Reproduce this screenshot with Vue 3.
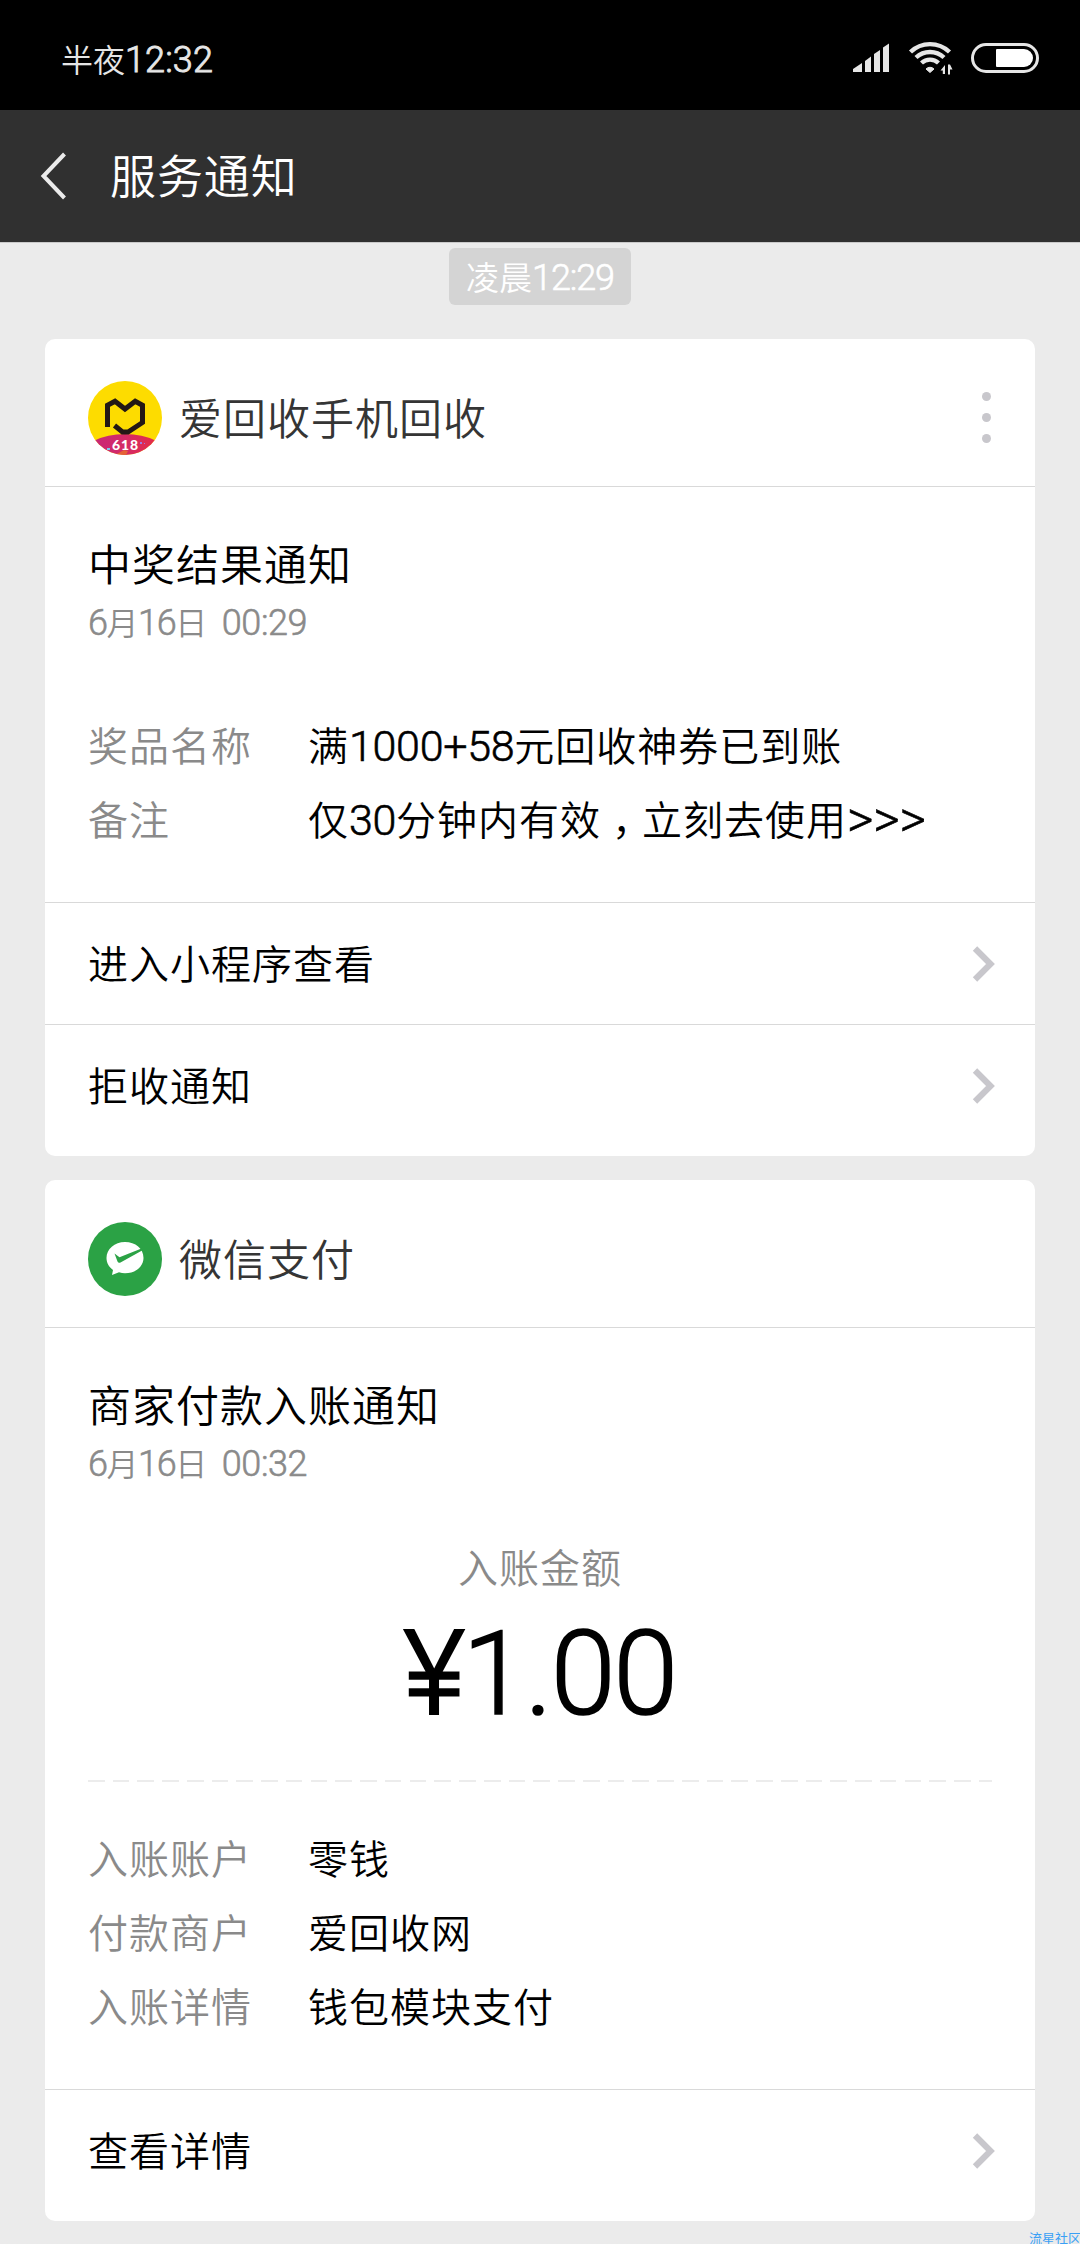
<script setup>
import { h } from 'vue'

// Renders a string with its Latin runs and full-width commas in their own spans.
const Mixed = (props) =>
  props.text
    .split(/(>+|[0-9:+]+|，)/)
    .filter(Boolean)
    .map((part) => {
      if (part === '，') return h('span', { class: 'comma' }, part)
      if (/^>/.test(part)) return h('span', { class: 'num arrows' }, part)
      if (/^[0-9:+]/.test(part)) return h('span', { class: 'num' }, part)
      return part
    })
Mixed.props = ['text']

const cards = [
  {
    name: '爱回收手机回收',
    avatar: 'aihuishou',
    menu: true,
    title: '中奖结果通知',
    day: '6月16日',
    time: '00:29',
    fields: [
      ['奖品名称', '满1000+58元回收神券已到账'],
      ['备注', '仅30分钟内有效，立刻去使用>>>'],
    ],
    links: ['进入小程序查看', '拒收通知'],
  },
  {
    name: '微信支付',
    avatar: 'pay',
    title: '商家付款入账通知',
    day: '6月16日',
    time: '00:32',
    amount: { label: '入账金额', value: '1.00' },
    fields: [
      ['入账账户', '零钱'],
      ['付款商户', '爱回收网'],
      ['入账详情', '钱包模块支付'],
    ],
    links: ['查看详情'],
  },
]
</script>

<template>
  <div class="screen">
    <div class="status">
      <div class="clock"><Mixed text="半夜12:32" /></div>
      <svg class="signals" width="190" height="40" viewBox="0 0 190 40">
        <g fill="#e6e6e6">
          <path d="M0 32V29L9 23V32Z" />
          <path d="M12 32V21L18 16.500V32Z" />
          <path d="M21 32V14L27 10V32Z" />
          <path d="M30 32V7.500L36 3.500V32Z" />
          <path d="M73 29a5.500 5.500 0 0 1 8 0L77 32.500Z" stroke="#e6e6e6" stroke-width="1" />
          <path d="M92 25v9h-2.200v-3.500h-2.300z M95 34.500v-10h2l2.500 5H97v5z" />
        </g>
        <g fill="none" stroke="#e6e6e6" stroke-width="4.400">
          <path d="M57.500 12a28 28 0 0 1 39 0" />
          <path d="M63 17.500a20.500 20.500 0 0 1 28 0" />
          <path d="M68.500 23a12.500 12.500 0 0 1 17 0" />
        </g>
        <rect x="119.500" y="4.500" width="65" height="27" rx="13.500" fill="none" stroke="#e6e6e6" stroke-width="3" />
        <path d="M144 9h27a9 9 0 0 1 0 18h-27a1 1 0 0 1-1-1V10a1 1 0 0 1 1-1z" fill="#fff" />
      </svg>
    </div>

    <div class="nav">
      <svg class="back" width="30" height="50" viewBox="0 0 30 50">
        <path d="M25.500 3L4.500 25L25.500 47" fill="none" stroke="#ebebeb" stroke-width="4" />
      </svg>
      <h1>服务通知</h1>
    </div>

    <main>
      <div class="stamp"><Mixed text="凌晨12:29" /></div>

      <section v-for="card in cards" :key="card.name" class="card">
        <header>
          <svg v-if="card.avatar === 'aihuishou'" class="avatar" viewBox="0 0 74 74">
            <defs>
              <clipPath id="disc"><circle cx="37" cy="37" r="37" /></clipPath>
              <linearGradient id="banner" x1="0" x2="1">
                <stop offset="0" stop-color="#c4267c" />
                <stop offset=".5" stop-color="#d42a66" />
                <stop offset="1" stop-color="#ea2d3c" />
              </linearGradient>
            </defs>
            <g clip-path="url(#disc)">
              <rect width="74" height="74" fill="#fddc00" />
              <ellipse cx="37" cy="75" rx="43" ry="22" fill="url(#banner)" />
              <path d="M27 74L36 69L40 70L38 74Z" fill="#e8702c" opacity=".8" />
              <path d="M19 67h3v2h-3z" fill="#7ac8ee" />
              <path d="M52 61h2v2h-2zM56 62h1v1h-1z" fill="#a07be0" />
            </g>
            <path
              d="M19.500 46V24.300L27 20.200L37 28L47.200 20.200L54.500 24.300V41.500L40 51H34.500L26.500 44.500"
              fill="none" stroke="#231815" stroke-width="5"
            />
            <text x="37.500" y="68.500" text-anchor="middle" class="badge">618</text>
          </svg>
          <svg v-else class="avatar" viewBox="0 0 74 74">
            <circle cx="37" cy="37" r="37" fill="#2ba245" />
            <path
              d="M37 20C26.500 20 18.500 27 18.500 36C18.500 41 21 45 25 48L24 53L31 50.300C33 51 35 51.300 37 51.300C47.500 51.300 55.500 44.500 55.500 36C55.500 26.500 47.500 20 37 20Z"
              fill="#fff"
            />
            <path d="M26.500 31.500L31.500 35.300L53.500 26.500L55 28L32.500 40.500Q30.500 41.500 29.500 39.500Z" fill="#2ba245" />
          </svg>
          <span class="name">{{ card.name }}</span>
          <span v-if="card.menu" class="menu"><i></i><i></i><i></i></span>
        </header>

        <div class="body">
          <h2>{{ card.title }}</h2>
          <div class="date">
            <span class="day"><Mixed :text="card.day" /></span>
            <span><Mixed :text="card.time" /></span>
          </div>

          <div v-if="card.amount" class="amount">
            <div class="amount-label">{{ card.amount.label }}</div>
            <div class="amount-value"><b>¥</b>{{ card.amount.value }}</div>
          </div>

          <dl>
            <div v-for="[label, value] in card.fields" :key="label">
              <dt>{{ label }}</dt>
              <dd><Mixed :text="value" /></dd>
            </div>
          </dl>
        </div>

        <div v-for="link in card.links" :key="link" class="link">
          <span>{{ link }}</span>
          <svg width="24" height="36" viewBox="0 0 24 36">
            <path d="M3 2.500L18.500 18L3 33.500" fill="none" stroke="#c8c7cc" stroke-width="6.200" />
          </svg>
        </div>
      </section>
    </main>
    <div class="watermark">流星社区</div>
  </div>
</template>

<style>
body {
  margin: 0;
  background: #ebebeb;
}
</style>

<style scoped>
.screen {
  position: relative;
  width: 1080px;
  height: 2244px;
  overflow: hidden;
  background: #ebebeb;
  color: #000;
  font-family: "Noto Sans CJK SC", sans-serif;
  font-weight: 350;
  white-space: nowrap;
}

.screen :deep(.num) {
  font-family: Roboto, sans-serif;
  font-weight: 300;
  font-size: 43px;
  line-height: 0;
  letter-spacing: -0.3px;
  -webkit-text-stroke: 0.6px currentColor;
}

.screen :deep(.comma) {
  padding: 0 9px 0 11px;
  font-feature-settings: "halt";
}

.screen :deep(.arrows) {
  font-size: 51px;
  letter-spacing: -0.3px;
  vertical-align: -2px;
}

.status {
  display: flex;
  justify-content: space-between;
  height: 110px;
  box-sizing: border-box;
  padding: 39px 37px 0 61px;
  background: #000;
  color: #e6e6e6;
}

.signals {
  margin-top: 0.7px;
}

.clock {
  font-size: 32px;
  line-height: 38px;
}

.clock :deep(.num) {
  font-size: 36px;
  letter-spacing: 0.1px;
  -webkit-text-stroke-width: 0.9px;
}

.nav {
  display: flex;
  align-items: center;
  height: 132px;
  background: #303030;
  border-bottom: 1px solid #cacaca;
}

.back {
  margin-left: 39px;
}

h1 {
  margin: -7px 0 0 41px;
  font-size: 46px;
  line-height: 60px;
  font-weight: 350;
  letter-spacing: 0.9px;
  color: #fff;
}

main {
  display: flex;
  flex-direction: column;
  gap: 24px;
  padding: 5px 45px 0;
}

.stamp {
  align-self: center;
  width: 182px;
  height: 57px;
  margin-bottom: 10px;
  border-radius: 6px;
  background: #d4d4d4;
  color: #fff;
  font-size: 33px;
  line-height: 56px;
  text-align: center;
}

.stamp :deep(.num) {
  font-size: 36px;
  letter-spacing: -1.1px;
}

.card {
  border-radius: 10px;
  background: #fff;
  padding-bottom: 10px;
}

header {
  display: flex;
  align-items: center;
  height: 148px;
  box-sizing: border-box;
  padding: 11px 44px 0 43px;
  border-bottom: 1px solid #d9d9d9;
}

.avatar {
  width: 74px;
  height: 74px;
}

.badge {
  font: 900 14px Lato, sans-serif;
  letter-spacing: 0.8px;
  fill: #fff;
}

.name {
  margin: -5px 0 0 17px;
  font-size: 43px;
  letter-spacing: 1px;
  color: #353535;
}

.menu {
  display: flex;
  flex-direction: column;
  gap: 12px;
  margin: -1px 0 0 auto;
}

.menu i {
  width: 9px;
  height: 9px;
  border-radius: 50%;
  background: #c8c7cc;
}

.body {
  padding: 45px 43px 47px;
}

h2 {
  margin: 0;
  font-size: 43px;
  line-height: 60px;
  font-weight: 350;
  letter-spacing: 1px;
}

.date {
  display: flex;
  gap: 15px;
  margin-top: 7px;
  font-size: 32px;
  line-height: 44px;
  color: #8a8a8a;
}

.date :deep(.num) {
  font-size: 36px;
  letter-spacing: -0.4px;
}

.date .day {
  letter-spacing: -0.5px;
}

.date .day :deep(.num) {
  letter-spacing: -1.4px;
}

.amount {
  margin-top: 52px;
  text-align: center;
}

.amount-label {
  font-size: 40px;
  line-height: 60px;
  letter-spacing: 1px;
  color: #8a8a8a;
}

.amount-value {
  height: 120px;
  padding: 18px 0 46px;
  font: 300 117px/121px Roboto, sans-serif;
  letter-spacing: -2.2px;
  -webkit-text-stroke: 1.6px #000;
}

.amount-value b {
  font-weight: 300;
  -webkit-text-stroke: 3px #000;
}

.amount::after {
  content: "";
  display: block;
  height: 2px;
  background: repeating-linear-gradient(90deg, #ececec 0 16.5px, transparent 16.5px 24.75px);
}

dl {
  margin: 64px 0 0;
  font-size: 40px;
  line-height: 74px;
  letter-spacing: 1px;
}

.amount + dl {
  margin-top: 38px;
}

dl > div {
  display: flex;
  height: 74px;
}

dt {
  width: 220px;
  color: #8a8a8a;
}

dd {
  margin: 0;
}

.link {
  display: flex;
  align-items: center;
  justify-content: space-between;
  height: 121px;
  padding: 0 39px 0 43px;
  border-top: 1px solid #d9d9d9;
  font-size: 40px;
  letter-spacing: 1px;
}

.link span {
  margin-top: -4px;
}

.watermark {
  position: absolute;
  left: 1029px;
  top: 2228px;
  font-size: 13px;
  line-height: 20px;
  font-weight: 400;
  color: #3aa0f5;
}
</style>
